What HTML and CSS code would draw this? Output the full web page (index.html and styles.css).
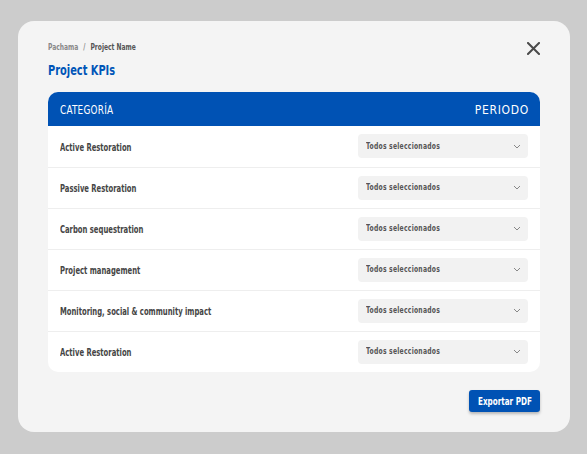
FILE: index.html
```html
<!DOCTYPE html>
<html lang="es">
<head>
  <meta charset="UTF-8" />
  <meta name="viewport" content="width=device-width, initial-scale=1.0"/>
  <title>Project KPIs</title>
  <link rel="stylesheet" href="styles.css">
</head>
<body>
  <div class="modal">
    <div class="modal-head">
      <div class="heading">
        <div class="crumbs"><span>Pachama</span><span class="sep">/</span><strong>Project Name</strong></div>
        <h2><span>Project KPIs</span></h2>
      </div>
      <button class="close" aria-label="Cerrar">
        <svg width="13" height="13" viewBox="0 0 13 13"><path d="M1 1L12 12M12 1L1 12" stroke="#4a4a4a" stroke-width="2" stroke-linecap="square"/></svg>
      </button>
    </div>

    <div class="table">
      <div class="table-head">
        <span class="col-left">Categoría</span>
        <span class="col-right">Periodo</span>
      </div>
      <div class="row">
        <span class="name">Active Restoration</span>
        <div class="select"><span>Todos seleccionados</span> <svg width="8" height="5" viewBox="0 0 8 5"><path d="M1 1l3 3 3-3" fill="none" stroke="#888" stroke-width="1"/></svg></div>
      </div>
      <div class="row">
        <span class="name">Passive Restoration</span>
        <div class="select"><span>Todos seleccionados</span> <svg width="8" height="5" viewBox="0 0 8 5"><path d="M1 1l3 3 3-3" fill="none" stroke="#888" stroke-width="1"/></svg></div>
      </div>
      <div class="row">
        <span class="name">Carbon sequestration</span>
        <div class="select"><span>Todos seleccionados</span> <svg width="8" height="5" viewBox="0 0 8 5"><path d="M1 1l3 3 3-3" fill="none" stroke="#888" stroke-width="1"/></svg></div>
      </div>
      <div class="row">
        <span class="name">Project management</span>
        <div class="select"><span>Todos seleccionados</span> <svg width="8" height="5" viewBox="0 0 8 5"><path d="M1 1l3 3 3-3" fill="none" stroke="#888" stroke-width="1"/></svg></div>
      </div>
      <div class="row">
        <span class="name">Monitoring, social &amp; community impact</span>
        <div class="select"><span>Todos seleccionados</span> <svg width="8" height="5" viewBox="0 0 8 5"><path d="M1 1l3 3 3-3" fill="none" stroke="#888" stroke-width="1"/></svg></div>
      </div>
      <div class="row">
        <span class="name">Active Restoration</span>
        <div class="select"><span>Todos seleccionados</span> <svg width="8" height="5" viewBox="0 0 8 5"><path d="M1 1l3 3 3-3" fill="none" stroke="#888" stroke-width="1"/></svg></div>
      </div>
    </div>

    <div class="actions">
      <button class="export"><span>Exportar PDF</span></button>
    </div>
  </div>
</body>
</html>
```

FILE: styles.css
```css
* {
  box-sizing: border-box;
  margin: 0;
  padding: 0;
  font-family: 'DejaVu Sans Condensed', 'DejaVu Sans', sans-serif;
  font-stretch: condensed;
}

/* narrow the glyphs further so they read like a condensed display face */
h2 span,
.col-left,
.name,
.select span,
.export span {
  display: inline-block;
  transform-origin: left center;
}

body {
  background: #cccccc;
  padding: 21px 17px 22px 18px;
}

.modal {
  width: 552px;
  height: 411px;
  background: #f4f4f4;
  border-radius: 16px;
  padding: 20px 30px 0 30px;
}

.modal-head {
  display: flex;
  justify-content: space-between;
  align-items: flex-start;
}

.heading {
  width: 300px;
}

.crumbs {
  margin-top: 1px;
  font-size: 8px;
  color: #888;
  font-weight: bold;
  line-height: 12px;
  white-space: nowrap;
  transform: scaleX(0.83);
  transform-origin: left center;
}

.crumbs .sep {
  margin: 0 6px;
}

.crumbs strong {
  color: #555;
}

h2 {
  margin-top: 7px;
  font-size: 14px;
  color: #0055b8;
  line-height: 18px;
}

h2 span {
  transform: scaleX(0.78);
}

.close {
  border: none;
  background: none;
  margin-top: 1px;
  cursor: pointer;
}

.table {
  margin-top: 13px;
  background: white;
  border-radius: 10px;
  overflow: hidden;
}

.table-head {
  height: 34px;
  background: #0052b4;
  color: white;
  display: flex;
  justify-content: space-between;
  align-items: center;
  padding: 2px 12px 0 12px;
  font-size: 12px;
  text-transform: uppercase;
}

.col-left {
  letter-spacing: 0.3px;
  transform: scaleX(0.82);
}

.col-right {
  letter-spacing: 0.7px;
  margin-right: -1px;
}

.row {
  height: 41px;
  display: flex;
  justify-content: space-between;
  align-items: center;
  padding: 1px 12px 0 12px;
  border-top: 1px solid #eeeeee;
}

.table-head + .row {
  border-top: none;
}

.name {
  font-size: 11px;
  font-weight: bold;
  color: #454545;
  white-space: nowrap;
  transform: scaleX(0.69);
}

.select {
  width: 170px;
  height: 24px;
  margin-top: -2px;
  background: #f2f2f2;
  border-radius: 4px;
  display: flex;
  justify-content: space-between;
  align-items: center;
  padding: 0 7px 0 8px;
  font-size: 8px;
  font-weight: bold;
  color: #555;
  letter-spacing: 0.3px;
}

.select span {
  white-space: nowrap;
  transform: scaleX(0.84);
}

.actions {
  display: flex;
  justify-content: flex-end;
  margin-top: 18px;
}

.export {
  width: 71px;
  height: 22px;
  background: #0052b4;
  color: white;
  border: none;
  border-radius: 3px;
  font-size: 11px;
  font-weight: bold;
  white-space: nowrap;
  text-align: left;
  padding-left: 9px;
  box-shadow: 0 2px 3px rgba(0, 0, 0, 0.25);
  cursor: pointer;
}

.export span {
  transform: scaleX(0.73);
}
```
